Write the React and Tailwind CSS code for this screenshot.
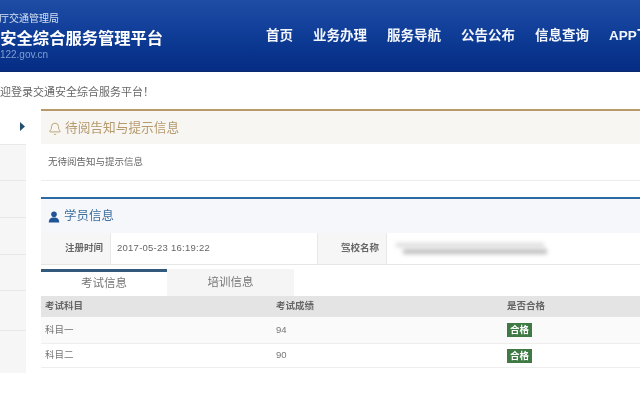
import React from 'react';
import { Bell } from 'lucide-react';

const FONT = 'font-["Liberation_Sans","Noto_Sans_CJK_SC",sans-serif]';
const NAV = ['首页', '业务办理', '服务导航', '公告公布', '信息查询', 'APP下载'];

function Header() {
  return (
    <div className="flex h-[72px] w-[640px] flex-shrink-0 overflow-hidden border-b border-[#0b2a6b] bg-gradient-to-b from-[#1f4da6] via-[#0e3c96] to-[#062c84]">
      <div className="flex w-[266px] flex-shrink-0 flex-col overflow-hidden pt-[12px]">
        <div className="ml-[-21px] whitespace-nowrap text-[10px] leading-[14px] text-[#d5e0f2]">公安厅交通管理局</div>
        <div className="ml-[-16px] mt-[1px] whitespace-nowrap text-[16.3px] font-bold leading-[22px] text-white">交安全综合服务管理平台</div>
        <div className="ml-[-24px] mt-[-1px] whitespace-nowrap text-[10px] leading-[14px] text-[#7f9fd2]">www.122.gov.cn</div>
      </div>
      <div className="flex items-center gap-[20px] whitespace-nowrap pt-[2px]">
        {NAV.map(n => (
          <span key={n} className="text-[13.5px] font-bold text-[#f2f5fb]">{n}</span>
        ))}
      </div>
    </div>
  );
}

function Sidebar() {
  return (
    <div className="flex w-[26px] flex-shrink-0 flex-col">
      <div className="flex h-[35px] items-center justify-end pr-[1px]">
        <svg width="5" height="9" viewBox="0 0 5 9"><path d="M0 0l5 4.5L0 9z" fill="#24506f" /></svg>
      </div>
      {[36, 37, 37, 36, 40, 43].map((h, i) => (
        <div key={i} style={{ height: h }} className="border-t border-[#e8e8e8] bg-[#f6f6f6]" />
      ))}
    </div>
  );
}

function InfoRow() {
  return (
    <div className="flex h-[32px] border-b border-[#e6e6e6] text-[9.5px]">
      <div className="flex w-[70px] items-center justify-end border-r border-[#e8e8e8] bg-[#f6f6f6] pr-[7px] font-bold text-[#666]">注册时间</div>
      <div className="flex w-[206px] items-center pl-[6px] tracking-[0.25px] text-[#666]">2017-05-23 16:19:22</div>
      <div className="flex w-[70px] items-center justify-end border-x border-[#e8e8e8] bg-[#f6f6f6] pr-[7px] font-bold text-[#666]">驾校名称</div>
      <div className="flex flex-col gap-[2px] pl-[8px] pt-[10px]">
        <div className="ml-[1px] h-[4px] w-[148px] bg-[#d9d9d9] blur-[2px]" />
        <div className="ml-[8px] h-[5px] w-[144px] bg-[#bdbdbd] blur-[2px]" />
      </div>
    </div>
  );
}

function ExamTable() {
  const rows = [['科目一', '94', 'bg-[#fafafa]', 'h-[27px]'], ['科目二', '90', 'bg-white', 'h-[24px]']];
  return (
    <div className="text-[9.5px] text-[#777]">
      <div className="flex h-[21px] items-center bg-[#e4e4e4] pl-[4px] font-bold text-[#666]">
        <div className="w-[231px]">考试科目</div>
        <div className="w-[231px]">考试成绩</div>
        <div>是否合格</div>
      </div>
      {rows.map(r => (
        <div key={r[0]} className={`flex items-center border-b border-[#eeeeee] pl-[4px] ${r[2]} ${r[3]}`}>
          <div className="w-[231px]">{r[0]}</div>
          <div className="w-[231px]">{r[1]}</div>
          <span className="bg-[#3f7a45] px-[3px] py-[1px] text-[9.5px] font-bold leading-[12px] text-white">合格</span>
        </div>
      ))}
    </div>
  );
}

function Main() {
  return (
    <div className="ml-[15px] flex w-[599px] flex-shrink-0 flex-col">
      <div className="border-t-2 border-b border-t-[#b89a68] border-b-[#ececec]">
        <div className="flex h-[33px] items-center gap-[3px] bg-[#f7f6f3] pl-[7px] pt-[3px] text-[12.7px] text-[#b59a6c]">
          <Bell size={14} strokeWidth={1.5} />
          <span>待阅告知与提示信息</span>
        </div>
        <div className="flex h-[36px] items-center pl-[7px] text-[9.5px] text-[#666]">无待阅告知与提示信息</div>
      </div>
      <div className="mt-[16px] border-t-2 border-t-[#2c6aa6]">
        <div className="flex h-[34px] items-center gap-[4px] bg-[#f5f7fa] pl-[7px] pt-[1px] text-[12.5px] text-[#3f6f9f]">
          <svg width="12" height="12" viewBox="0 0 12 12">
            <circle cx="6" cy="3.2" r="2.8" fill="#1f5596" />
            <path d="M0.8 11.5c0-3.2 1.6-5 5.2-5s5.2 1.8 5.2 5z" fill="#1f5596" />
          </svg>
          <span>学员信息</span>
        </div>
        <InfoRow />
        <div className="mt-[4px] flex h-[27px] text-[11.5px] text-[#777]">
          <div className="flex w-[126px] items-center justify-center border-t-[3px] border-t-[#33597c] bg-white pb-[1px]">考试信息</div>
          <div className="flex w-[127px] items-center justify-center bg-[#f5f5f5]">培训信息</div>
        </div>
        <ExamTable />
      </div>
    </div>
  );
}

export default function App() {
  return (
    <div className={`flex h-[400px] w-[640px] flex-col overflow-hidden bg-white blur-[0.5px] ${FONT}`}>
      <Header />
      <div className="flex h-[37px] flex-shrink-0 items-center pt-[3px] text-[11px] text-[#666]">
        <span className="ml-[-11px] whitespace-nowrap">欢迎登录交通安全综合服务平台！</span>
      </div>
      <div className="flex">
        <Sidebar />
        <Main />
      </div>
    </div>
  );
}
